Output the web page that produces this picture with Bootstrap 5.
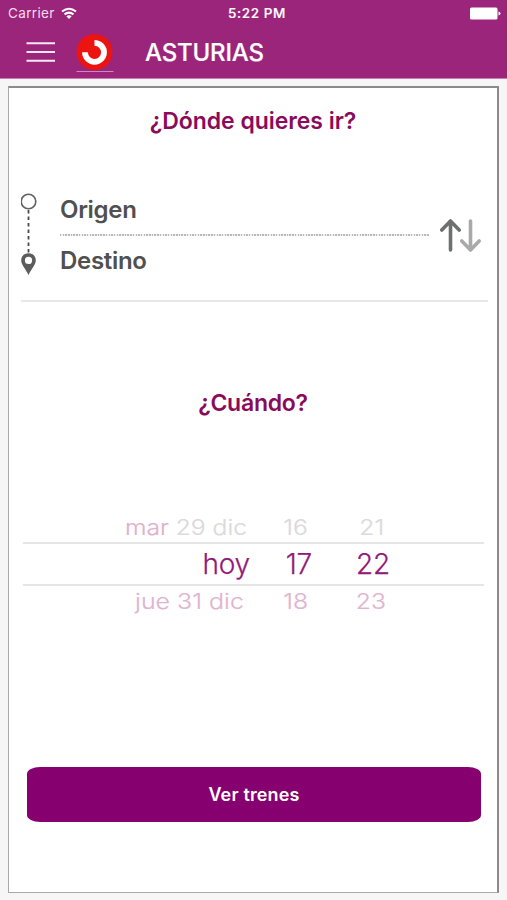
<!DOCTYPE html>
<html lang="es">
<head>
<meta charset="utf-8">
<meta name="viewport" content="width=device-width, initial-scale=1">
<title>Asturias</title>
<link href="https://cdn.jsdelivr.net/npm/bootstrap@5.3.0/dist/css/bootstrap.min.css" rel="stylesheet">
<style>
body{background:#f6f6f6;font-family:Inter,"Liberation Sans",sans-serif;height:900px;overflow:hidden;color:#4b4b4b}
svg{display:block;flex:none}
.top-area{background:#9b257b;height:79px;border-bottom:1px solid #c77fb4}
.status{height:27px;padding:0 6px 0 8px;font-size:13.500px;line-height:27px}
.status>div{flex:1 1 0}
.carrier{letter-spacing:.35px;color:#f3dcee}
.carrier svg{margin-left:5px}
.clock{font-weight:500;letter-spacing:.6px;padding-left:5px;-webkit-text-stroke:.2px #fff}
.bar{height:51px;padding-left:26px}
.logo{margin-left:21px;margin-top:3px}
.app-title{font-size:24px;font-weight:500;line-height:50px;margin-left:31px;letter-spacing:-.2px;-webkit-text-stroke:.2px #fff}
.panel{margin:7px 8px 0;width:491px;height:807px;border:1px solid #a9a9a9;border-top:2px solid #8b8b8b;border-right:2px solid #8b8b8b;background:#fff}
.ask{color:#8a0b5c;font-size:23px;font-weight:600;line-height:30px}
.ask-where{margin-top:18px;letter-spacing:-.050px}
.route{margin:52px 9px 0 12px;height:114px;border-bottom:2px solid #e8e8e8}
.pins{margin-top:-1px}
.fields{margin:-3px 0 0 22px;width:369px;font-size:24px;font-weight:600;letter-spacing:-.3px;color:#505050}
.field{height:49px;line-height:49px}
.dots{height:2px;background:repeating-linear-gradient(90deg,#b8b8b8 0 1.400px,#f0f0f0 1.400px 2.700px)}
.swap{margin:31px 0 0 11px}
.ask-when{margin-top:86px;letter-spacing:-.250px}
.picker{margin:94px 13px 0 14px}
.prow{grid-template-columns:227px 62px 78px 1fr;color:#dfb4d0;height:30px;line-height:30px}
.prow span{justify-self:end;transform-origin:right center;white-space:nowrap}
.now{height:44px;line-height:40px;font-size:28px;border-top:2px solid #e6e6e6;border-bottom:2px solid #e6e6e6;color:#93197a;font-weight:300;-webkit-text-stroke:.250px #93197a}
.now span{letter-spacing:-.2px}
.past{color:#dadada}
.past i{font-style:normal;color:#dfb0cd}
.side{grid-template-columns:224px 61px 76px 1fr;font-size:22px;font-weight:300;-webkit-text-stroke:.2px}
.side span{transform:scaleX(1.120)}
.next-row{grid-template-columns:221px 64px 78px 1fr}
.next-row span:first-child{transform:scaleX(1.135)}
.go{margin:151px 16px 0 18px;width:454px;height:55px;background:#860070;color:#fff;border:0;border-radius:13px/7px;font-size:18px;font-weight:600;letter-spacing:.150px;line-height:55px;padding:0}
.go:hover{background:#860070;color:#fff}
</style>
<script src="https://cdn.jsdelivr.net/npm/bootstrap@5.3.0/dist/js/bootstrap.bundle.min.js"></script>
</head>
<body>
<header class="top-area text-white">
  <div class="status d-flex align-items-center">
    <div class="carrier d-flex align-items-center">Carrier
      <svg width="18" height="13" viewBox="0 0 18 13" fill="none" stroke="#fff" stroke-width="2"><path d="M2 4.500Q9-1 16 4.500M4.500 7.400Q9 3.800 13.500 7.400"/><path d="M6.300 9.200Q9 7.200 11.700 9.200L9 12z" fill="#fff" stroke="none"/></svg>
    </div>
    <div class="clock text-center">5:22 PM</div>
    <div class="d-flex justify-content-end"><svg width="31" height="13" viewBox="0 0 31 13" fill="#fff"><rect width="27.500" height="12" y=".5" rx="1.500"/><path d="M28.500 4.500q2 .5 2 2t-2 2z"/></svg></div>
  </div>
  <nav class="bar d-flex align-items-center">
    <svg width="29" height="22" viewBox="0 0 29 22" stroke="#f8e8f4" stroke-width="2"><path d="M.5 1.300H29M.5 10H29M.5 18.700H29"/></svg>
    <svg class="logo" width="38" height="40" viewBox="0 0 38 40"><circle cx="18.500" cy="18" r="18" fill="#ec1410"/><path d="M18.500 8.800A9.500 9.500 0 1 1 9 18.300" fill="none" stroke="#fff" stroke-width="5.800"/><path d="M.5 37.500h37" stroke="#c78bc0"/></svg>
    <div class="app-title">ASTURIAS</div>
  </nav>
</header>
<main class="panel">
  <h1 class="ask ask-where text-center mb-0">¿Dónde quieres ir?</h1>
  <section class="route d-flex">
    <svg class="pins" width="17" height="100" viewBox="0 0 17 100"><circle cx="7.500" cy="14.500" r="7.300" fill="none" stroke="#626262" stroke-width="1.600"/><path d="M7.500 23v43" stroke="#4b4b4b" stroke-width="1.800" stroke-dasharray="3.500 3"/><path fill="#5c5c5c" fill-rule="evenodd" d="M7.500 66.300C3 66.300.2 69.300.2 73.300c0 4.500 4 8 7.300 14.700 3.300-6.700 7.300-10.200 7.300-14.700 0-4-2.800-7-7.300-7zm0 3.500a3.600 3.600 0 1 1 0 7.200 3.600 3.600 0 0 1 0-7.200z"/></svg>
    <div class="fields">
      <div class="field">Origen</div>
      <div class="dots"></div>
      <div class="field">Destino</div>
    </div>
    <svg class="swap" width="43" height="34" viewBox="0 0 43 34" fill="none" stroke-width="3.600" stroke-linecap="round" stroke-linejoin="round"><path stroke="#6e7070" d="M10.500 31V2M1.800 11L10.500 2l8.700 9"/><path stroke="#a9a9a9" d="M30.500 2v29M21.800 22L30.500 31l8.700-9"/></svg>
  </section>
  <h2 class="ask ask-when text-center mb-0">¿Cuándo?</h2>
  <section class="picker">
    <div class="prow side past d-grid"><span><i>mar</i> 29 dic</span><span>16</span><span>21</span></div>
    <div class="prow now d-grid"><span>hoy</span><span>17</span><span>22</span></div>
    <div class="prow side next-row d-grid"><span>jue 31 dic</span><span>18</span><span>23</span></div>
  </section>
  <button class="btn go" type="button">Ver trenes</button>
</main>
</body>
</html>
